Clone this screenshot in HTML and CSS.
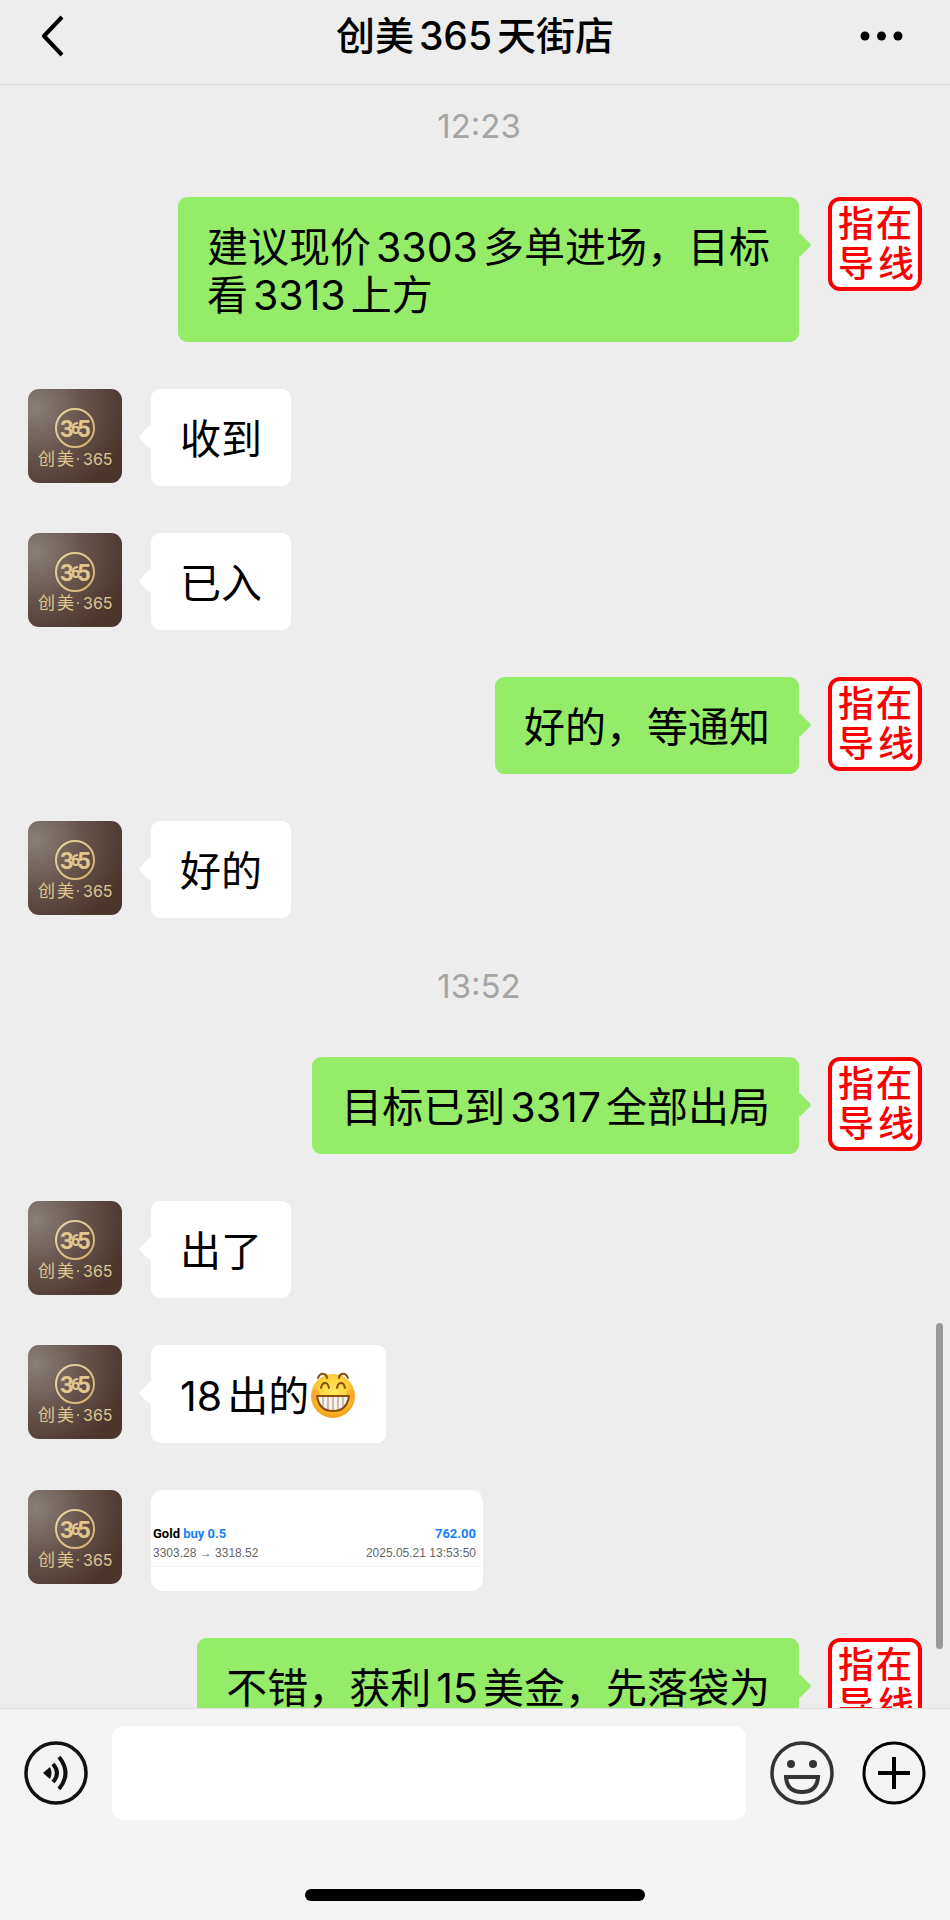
FILE: index.html
```html
<!DOCTYPE html>
<html lang="zh-CN">
  <head>
    <meta charset="UTF-8" />
    <meta name="viewport" content="width=device-width, initial-scale=1.0" />
    <title>创美365天街店</title>
    <link rel="stylesheet" href="styles.css">
  </head>
  <body>
    <!-- shared avatars -->
    <svg class="defs" aria-hidden="true">
      <defs>
        <radialGradient id="leather" cx="0.08" cy="0.2" r="1">
          <stop offset="0" stop-color="#8a7f79" />
          <stop offset="0.5" stop-color="#66554d" />
          <stop offset="1" stop-color="#4b352d" />
        </radialGradient>
        <linearGradient id="gold" x1="0" y1="0" x2="1" y2="1">
          <stop offset="0" stop-color="#ead9a2" />
          <stop offset="1" stop-color="#d3ae6c" />
        </linearGradient>
        <symbol id="avatar-shop" viewBox="0 0 94 94">
          <rect width="94" height="94" rx="11" fill="url(#leather)" />
          <circle cx="47" cy="39" r="19" fill="none" stroke="url(#gold)" stroke-width="2" />
          <text class="logo-number" x="32" y="48">3</text>
          <text class="logo-number logo-number-small" x="43" y="45">6</text>
          <text class="logo-number" x="49" y="48">5</text>
          <text class="logo-name" x="10" y="76">创</text>
          <text class="logo-name" x="29" y="76">美</text>
          <circle cx="50" cy="70" r="1" fill="#d6bb82" />
          <text class="logo-digits" x="55" y="76">365</text>
        </symbol>
        <symbol id="avatar-stamp" viewBox="0 0 94 94">
          <rect x="2" y="2" width="90" height="90" rx="10" fill="#fff" stroke="#fa0000" stroke-width="4" />
          <text class="stamp-text" x="10" y="40">指</text>
          <text class="stamp-text" x="48" y="40">在</text>
          <text class="stamp-text" x="10" y="80">导</text>
          <text class="stamp-text" x="50" y="80">线</text>
        </symbol>
      </defs>
    </svg>

    <header class="topbar">
      <button class="icon-button back" aria-label="返回">
        <svg width="24" height="44" viewBox="0 0 24 44">
          <path d="M21 3 L3 22 L21 41" fill="none" stroke="#000" stroke-width="4" stroke-linejoin="round" />
        </svg>
      </button>
      <h1>创美365天街店</h1>
      <button class="icon-button more" aria-label="更多">
        <svg width="50" height="12" viewBox="0 0 50 12">
          <circle cx="6" cy="6" r="4.5" />
          <circle cx="22.5" cy="6" r="4.5" />
          <circle cx="39" cy="6" r="4.5" />
        </svg>
      </button>
    </header>

    <main class="chat">
      <time class="chat-time">12:23</time>

      <div class="message sent">
        <svg class="avatar"><use href="#avatar-stamp" /></svg>
        <div class="bubble">建议现价3303多单进场，目标<br>看3313上方</div>
      </div>
      <div class="message">
        <svg class="avatar"><use href="#avatar-shop" /></svg>
        <div class="bubble">收到</div>
      </div>
      <div class="message">
        <svg class="avatar"><use href="#avatar-shop" /></svg>
        <div class="bubble">已入</div>
      </div>
      <div class="message sent">
        <svg class="avatar"><use href="#avatar-stamp" /></svg>
        <div class="bubble">好的，等通知</div>
      </div>
      <div class="message">
        <svg class="avatar"><use href="#avatar-shop" /></svg>
        <div class="bubble">好的</div>
      </div>

      <time class="chat-time">13:52</time>

      <div class="message sent">
        <svg class="avatar"><use href="#avatar-stamp" /></svg>
        <div class="bubble">目标已到3317全部出局</div>
      </div>
      <div class="message">
        <svg class="avatar"><use href="#avatar-shop" /></svg>
        <div class="bubble">出了</div>
      </div>
      <div class="message">
        <svg class="avatar"><use href="#avatar-shop" /></svg>
        <div class="bubble">18出的<svg class="emoji" viewBox="0 0 48 48" role="img" aria-label="呲牙">
            <defs>
              <radialGradient id="face" cx="0.5" cy="0.4" r="0.6">
                <stop offset="0" stop-color="#ffe95c" />
                <stop offset="0.6" stop-color="#ffcf3a" />
                <stop offset="1" stop-color="#f29a17" />
              </radialGradient>
            </defs>
            <circle cx="24" cy="25" r="22" fill="url(#face)" />
            <ellipse cx="7" cy="24" rx="4" ry="6" fill="#f9842a" opacity="0.4" />
            <ellipse cx="41" cy="24" rx="4" ry="6" fill="#f9842a" opacity="0.4" />
            <g fill="none" stroke="#8b4d0c" stroke-width="2" stroke-linecap="round">
              <path d="M9 7 Q11 2 15 3 Q18 4 18 7" />
              <path d="M30 7 Q30 4 33 3 Q37 2 39 7" />
              <path d="M12 17 Q13 12 16 12 Q19 12 20 17" />
              <path d="M28 17 Q29 12 32 12 Q35 12 36 17" />
            </g>
            <path d="M8 25 H40 Q38 40 24 40 Q10 40 8 25 Z" fill="#f7f2ec" stroke="#8b4d0c" stroke-width="2" stroke-linejoin="round" />
            <path d="M14 26 V35 M19 26 V38 M24 26 V39 M29 26 V38 M34 26 V35" stroke="#a08672" stroke-width="1" />
          </svg></div>
      </div>
      <div class="message">
        <svg class="avatar"><use href="#avatar-shop" /></svg>
        <div class="trade-card">
          <div class="trade-row trade-main">
            <span>Gold <span class="blue">buy 0.5</span></span>
            <span class="blue">762.00</span>
          </div>
          <div class="trade-row trade-sub">
            <span>3303.28 → 3318.52</span>
            <span>2025.05.21 13:53:50</span>
          </div>
        </div>
      </div>
      <div class="message sent">
        <svg class="avatar"><use href="#avatar-stamp" /></svg>
        <div class="bubble">不错，获利15美金，先落袋为</div>
      </div>

      <div class="scroll-thumb"></div>
    </main>

    <footer class="composer">
      <div class="composer-row">
        <button class="icon-button" aria-label="语音">
          <svg width="64" height="64" viewBox="0 0 64 64">
            <circle cx="32" cy="32" r="30" fill="none" stroke="#111" stroke-width="3.5" />
            <path d="M19 32 L26 26 Q29 32 26 38 Z" fill="#111" />
            <path d="M29 23 Q37 32 29 41 M35 16 Q48 32 35 48" fill="none" stroke="#111" stroke-width="4" />
          </svg>
        </button>
        <input class="message-input" type="text" aria-label="输入消息" />
        <button class="icon-button" aria-label="表情">
          <svg width="64" height="64" viewBox="0 0 64 64">
            <circle cx="32" cy="32" r="30" fill="none" stroke="#333" stroke-width="3.5" />
            <circle cx="21" cy="23" r="4" fill="#333" />
            <circle cx="43" cy="23" r="4" fill="#333" />
            <path d="M16 36 H48 Q47 51 32 51 Q17 51 16 36 Z" fill="none" stroke="#333" stroke-width="4" />
          </svg>
        </button>
        <button class="icon-button" aria-label="更多功能">
          <svg width="64" height="64" viewBox="0 0 64 64">
            <circle cx="32" cy="32" r="30" fill="none" stroke="#000" stroke-width="3" />
            <path d="M16 32 H48 M32 16 V48" stroke="#000" stroke-width="4" />
          </svg>
        </button>
      </div>
      <div class="home-indicator"></div>
    </footer>
  </body>
</html>
```
FILE: styles.css
```css
* {
  box-sizing: border-box;
}

body {
  margin: 0;
  height: 100vh;
  display: flex;
  flex-direction: column;
  overflow: hidden;
  background: #ededed;
  color: #000;
  font-family: Inter, "Noto Sans CJK SC", sans-serif;
  text-autospace: normal;
}

.defs {
  position: absolute;
  width: 0;
  height: 0;
}

.icon-button {
  display: flex;
  padding: 0;
  border: none;
  background: none;
  cursor: pointer;
}

/* header */
.topbar {
  display: grid;
  grid-template-columns: 1fr auto 1fr;
  align-items: center;
  padding: 6px 41px 18px;
  border-bottom: 1px solid #d8d8d8;
}

.topbar h1 {
  margin: 0;
  font-size: 39px;
  line-height: 60px;
  font-weight: 500;
}

.back {
  justify-self: start;
}

.more {
  justify-self: end;
}

/* messages */
.chat {
  position: relative;
  flex: 1;
  min-height: 0;
  overflow: hidden;
  display: flex;
  flex-direction: column;
  gap: 47px;
  padding: 20px 28px 0;
}

.chat-time {
  flex: none;
  padding: 0 0 3px 8px;
  color: #a5a5a5;
  font-size: 33px;
  line-height: 42px;
  text-align: center;
}

.message {
  flex: none;
  display: flex;
  align-items: flex-start;
  gap: 29px;
}

.message.sent {
  flex-direction: row-reverse;
}

.avatar {
  flex: none;
  width: 94px;
  height: 94px;
}

.bubble {
  position: relative;
  padding: 26px 29px 23px;
  border-radius: 9px;
  background: #fff;
  font-size: 41px;
  line-height: 48px;
}

.bubble::before {
  content: "";
  position: absolute;
  top: 39px;
  left: -9px;
  width: 18px;
  height: 18px;
  border-radius: 3px;
  background: inherit;
  transform: rotate(45deg);
}

.sent .bubble {
  background: #95ec69;
}

.sent .bubble::before {
  left: auto;
  right: -9px;
}

.emoji {
  width: 48px;
  height: 48px;
  vertical-align: -8px;
}

/* avatars */
.logo-number {
  font: 700 24px Roboto, sans-serif;
  fill: #e0c78c;
}

.logo-number-small {
  font-size: 16px;
}

.logo-name {
  font: 400 17px "Noto Sans CJK SC", sans-serif;
  fill: #dfc68f;
}

.logo-digits {
  font: 400 16px Inter, sans-serif;
  fill: #dfc68f;
}

.stamp-text {
  font: 500 36px "Noto Sans CJK SC", sans-serif;
  fill: #fa0000;
}

/* trade picture */
.trade-card {
  width: 332px;
  height: 101px;
  padding-top: 34px;
  border-radius: 12px;
  background: #fff;
}

.trade-row {
  display: flex;
  justify-content: space-between;
  padding: 0 7px 0 2px;
}

.trade-main {
  font: 700 13px/20px Roboto, sans-serif;
}

.blue {
  color: #157efb;
}

.trade-sub {
  padding-bottom: 4px;
  border-bottom: 1px solid #f4f4f4;
  color: #666;
  font: 12px/18px "Liberation Sans", sans-serif;
}

.scroll-thumb {
  position: absolute;
  top: 1238px;
  right: 7px;
  width: 7px;
  height: 326px;
  border-radius: 4px;
  background: #999;
}

/* bottom bar */
.composer {
  padding: 17px 24px 19px;
  border-top: 1px solid #dcdcdc;
  background: #f4f4f4;
}

.composer-row {
  display: flex;
  align-items: center;
  gap: 24px;
}

.composer-row .icon-button {
  flex: none;
}

.composer-row .icon-button + .icon-button {
  margin-left: 4px;
}

.message-input {
  flex: 1;
  min-width: 0;
  height: 94px;
  padding: 0 24px;
  border: none;
  border-radius: 12px;
  background: #fff;
  font: 41px Inter, "Noto Sans CJK SC", sans-serif;
}

.home-indicator {
  width: 340px;
  height: 12px;
  margin: 69px auto 0;
  border-radius: 6px;
  background: #000;
}
```
